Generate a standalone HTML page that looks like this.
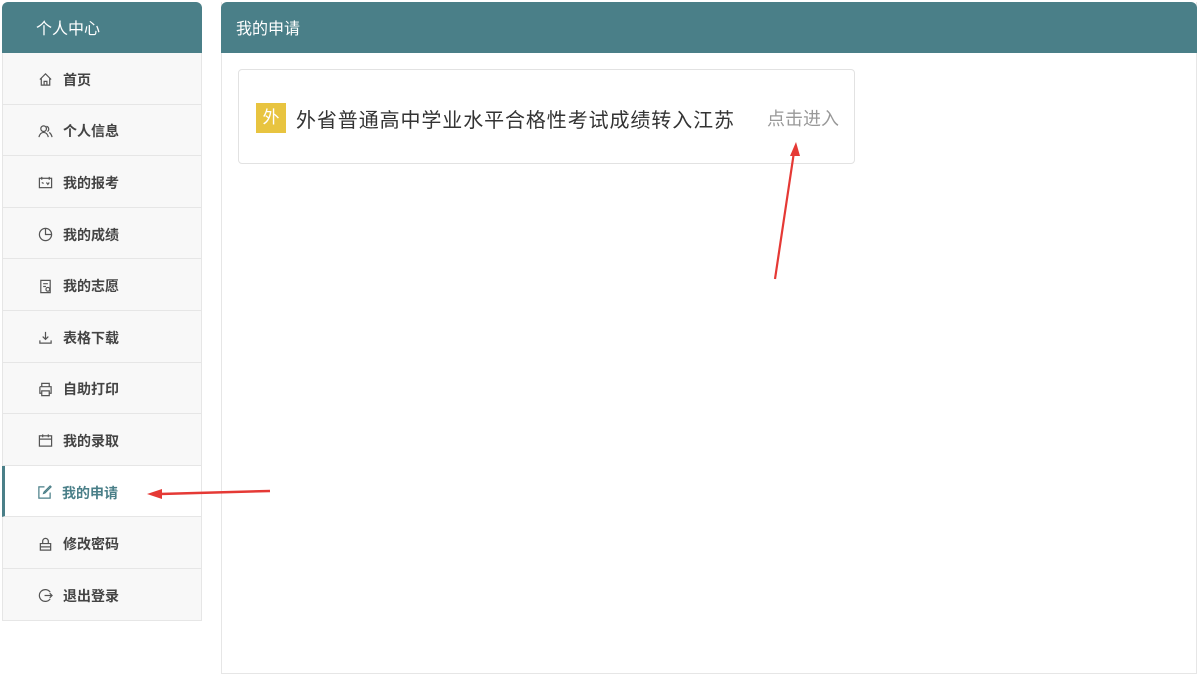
<!DOCTYPE html>
<html><head><meta charset="utf-8"><style>
*{margin:0;padding:0;box-sizing:border-box}
body{width:1200px;height:674px;background:#fff;font-family:"Liberation Sans","Noto Sans CJK SC",sans-serif;position:relative;overflow:hidden}
.side{position:absolute;left:2px;top:2px;width:200px}
.sh{height:51px;background:#4a7f88;border-radius:6px 6px 0 0;color:#fff;font-size:16px;line-height:51px;padding-left:34px;padding-top:2px}
.it{height:51.6px;background:#f8f8f8;border:1px solid #e6e6e6;border-top:none;display:flex;align-items:center;padding-left:35px;padding-top:3px;font-size:14px;font-weight:bold;color:#444}
.it svg{width:15px;height:15px;margin-right:10px;fill:none;stroke:#555;stroke-width:1.3}
.it.act{background:#fff;color:#4a7f88;border-left:3px solid #4a7f88;padding-left:32px}
.it.act svg{stroke:#4a7f88}
.main{position:absolute;left:221px;top:2px;width:976px;height:672px;border:1px solid #e6e6e6;border-top:none}
.mh{height:51px;background:#4a7f88;border-radius:6px 6px 0 0;color:#fff;font-size:16px;line-height:51px;padding-left:15px;margin:0 -1px;padding-top:2px}
.card{position:absolute;left:16px;top:67px;width:617px;height:95px;border:1px solid #e2e2e2;border-radius:4px;display:flex;align-items:center;padding-left:17px;padding-top:3px}
.b{width:30px;height:30px;background:#e8c440;color:#fff;font-size:17px;text-align:center;line-height:30px;margin-right:10px}
.t{font-size:20px;color:#333;flex:1;letter-spacing:0.9px}
.g{font-size:18px;color:#999;margin-right:15px}
svg.ov{position:absolute;left:0;top:0}
</style></head><body>
<div class="side">
<div class="sh">个人中心</div>
<div class="it"><svg viewBox="0 0 16 16"><path d="M2 8L8 2l6 6M3.5 6.5V14h9V6.5M6.5 14v-4h3v4"/></svg>首页</div>
<div class="it"><svg viewBox="0 0 16 16"><circle cx="6" cy="5" r="3"/><path d="M1 14c1-4 3-5 5-5s4 1 5 5M9 2.5a3 3 0 0 1 1 5.5M12 9c1.5 1 2.5 3 3 5"/></svg>个人信息</div>
<div class="it"><svg viewBox="0 0 16 16"><rect x="1.5" y="3.5" width="13" height="10"/><path d="M4 2v3M12 2v3M4 8l2 1M9 8l1.5 2L12 8"/></svg>我的报考</div>
<div class="it"><svg viewBox="0 0 16 16"><circle cx="8" cy="8" r="6.5"/><path d="M8 1.5V8h6.5"/></svg>我的成绩</div>
<div class="it"><svg viewBox="0 0 16 16"><path d="M3 1.5h10v13H3zM5.5 5h5M5.5 8h3"/><circle cx="10.5" cy="11" r="2"/></svg>我的志愿</div>
<div class="it"><svg viewBox="0 0 16 16"><path d="M8 2v8M5 7l3 3 3-3M2 11v3h12v-3"/></svg>表格下载</div>
<div class="it"><svg viewBox="0 0 16 16"><path d="M4 5V1.5h8V5M2 5h12v7h-2M4 12H2V5M4 9.5h8v5H4z"/></svg>自助打印</div>
<div class="it"><svg viewBox="0 0 16 16"><rect x="1.5" y="3" width="13" height="11"/><path d="M1.5 6.5h13M5 1.5v3M11 1.5v3"/></svg>我的录取</div>
<div class="it act"><svg viewBox="0 0 16 16"><path d="M8 2H2v12h12V8M7 9l1.5-.5L15 2l-1-1-6.5 6.5z"/></svg>我的申请</div>
<div class="it"><svg viewBox="0 0 16 16"><path d="M5 7V4.5a3 3 0 0 1 6 0V7M2.5 7h11v7h-11zM2.5 10.5h11"/></svg>修改密码</div>
<div class="it"><svg viewBox="0 0 16 16"><path d="M13 4.5A6.3 6.3 0 1 0 13 11.5M7 8h8M12.5 5.5L15 8l-2.5 2.5"/></svg>退出登录</div>
</div>
<div class="main">
<div class="mh">我的申请</div>
<div class="card"><div class="b">外</div><div class="t">外省普通高中学业水平合格性考试成绩转入江苏</div><div class="g">点击进入</div></div>
</div>
<svg class="ov" width="1200" height="674">
<path d="M775 279L794 152" stroke="#e53935" stroke-width="2.2"/>
<path d="M796 142L790 156L800 156Z" fill="#e53935"/>
<path d="M270 491L160 494" stroke="#e53935" stroke-width="2.5"/>
<path d="M147 494L162 489L162 499Z" fill="#e53935"/>
</svg>
</body></html>
